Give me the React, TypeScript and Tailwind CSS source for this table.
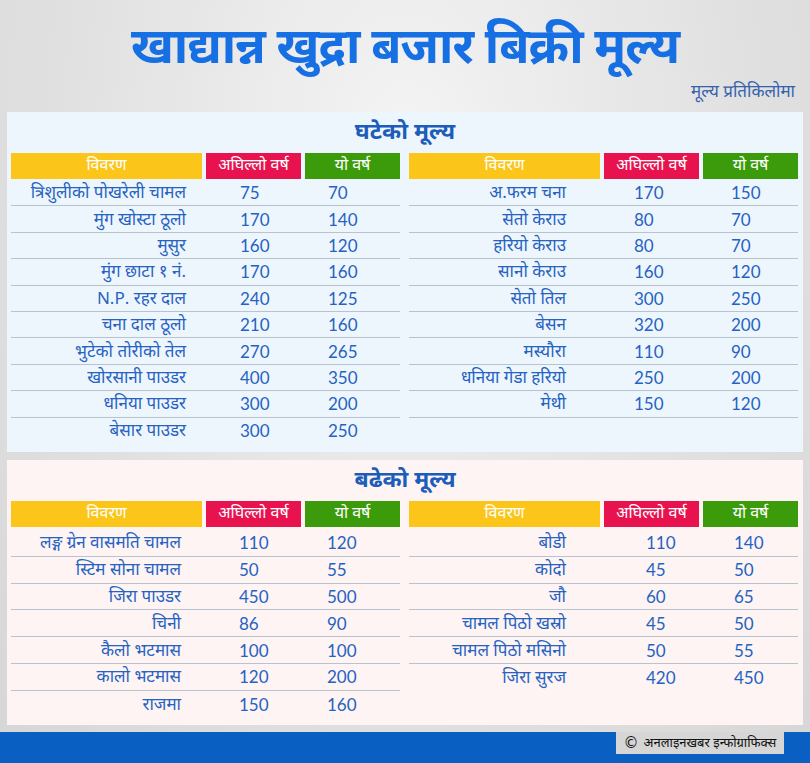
type Row = [string, string, string];

const FONT = "font-['Noto_Sans_Devanagari','Noto_Sans','Lohit_Devanagari',sans-serif]";

const dropLeft: Row[] = [
  ["त्रिशुलीको पोखरेली चामल", "75", "70"],
  ["मुंग खोस्टा ठूलो", "170", "140"],
  ["मुसुर", "160", "120"],
  ["मुंग छाटा १ नं.", "170", "160"],
  ["N.P. रहर दाल", "240", "125"],
  ["चना दाल ठूलो", "210", "160"],
  ["भुटेको तोरीको तेल", "270", "265"],
  ["खोरसानी पाउडर", "400", "350"],
  ["धनिया पाउडर", "300", "200"],
  ["बेसार पाउडर", "300", "250"],
];

const dropRight: Row[] = [
  ["अ.फरम चना", "170", "150"],
  ["सेतो केराउ", "80", "70"],
  ["हरियो केराउ", "80", "70"],
  ["सानो केराउ", "160", "120"],
  ["सेतो तिल", "300", "250"],
  ["बेसन", "320", "200"],
  ["मस्यौरा", "110", "90"],
  ["धनिया गेडा हरियो", "250", "200"],
  ["मेथी", "150", "120"],
];

const riseLeft: Row[] = [
  ["लङ्ग ग्रेन वासमति चामल", "110", "120"],
  ["स्टिम सोना चामल", "50", "55"],
  ["जिरा पाउडर", "450", "500"],
  ["चिनी", "86", "90"],
  ["कैलो भटमास", "100", "100"],
  ["कालो भटमास", "120", "200"],
  ["राजमा", "150", "160"],
];

const riseRight: Row[] = [
  ["बोडी", "110", "140"],
  ["कोदो", "45", "50"],
  ["जौ", "60", "65"],
  ["चामल पिठो खस्रो", "45", "50"],
  ["चामल पिठो मसिनो", "50", "55"],
  ["जिरा सुरज", "420", "450"],
];

interface PriceTableProps {
  rows: Row[];
  namePad: string;
  prevPad: string;
  currPad: string;
  rowHeight: string;
  bodyTop: string;
  lastLine?: boolean;
}

function PriceTable({ rows, namePad, prevPad, currPad, rowHeight, bodyTop, lastLine }: PriceTableProps) {
  return (
    <div className="w-[389px]">
      {/* शीर्षक पट्टी */}
      <div className="grid h-[26px] grid-cols-[191px_95px_95px] gap-x-[4px] text-[16px] leading-none text-white">
        <div className="flex items-center justify-center bg-[#fbc619] pt-[1px]">विवरण</div>
        <div className="flex items-center justify-center bg-[#e8124f] pt-[1px]">अघिल्लो वर्ष</div>
        <div className="flex items-center justify-center bg-[#3c9b0a] pt-[1px]">यो वर्ष</div>
      </div>
      <div className={bodyTop}>
        {rows.map(([name, prev, curr], i) => (
          <div
            key={name}
            className={`grid grid-cols-[191px_95px_95px] gap-x-[4px] items-center leading-none text-[#2562c2] ${rowHeight} ${
              i < rows.length - 1 || lastLine ? "border-b border-[#b9c3cd]" : ""
            }`}
          >
            <div className={`translate-y-[2px] text-right text-[17px] ${namePad}`}>{name}</div>
            <div className={`font-['Lato',sans-serif] text-[17px] ${prevPad}`}>{prev}</div>
            <div className={`font-['Lato',sans-serif] text-[17px] ${currPad}`}>{curr}</div>
          </div>
        ))}
      </div>
    </div>
  );
}

export default function App() {
  return (
    <div className={`flex h-[763px] w-[810px] flex-col overflow-hidden bg-[radial-gradient(ellipse_at_50%_20%,#f4f4f4_0%,#e2e2e2_55%,#d6d6d6_100%)] ${FONT}`}>
      {/* शीर्ष भाग */}
      <header className="flex h-[112px] shrink-0 flex-col">
        <h1 className="mt-[22px] text-center text-[49px] font-bold leading-[58px] tracking-[-1px] text-[#1670e4]">
          खाद्यान्न खुद्रा बजार बिक्री मूल्य
        </h1>
        <p className="mt-[2px] pr-[15px] text-right text-[17px] leading-[22px] text-[#3562ac]">मूल्य प्रतिकिलोमा</p>
      </header>

      {/* घटेको मूल्य */}
      <section className="mx-[7px] h-[340px] shrink-0 bg-[#eef6fd] px-[4px]">
        <h2 className="flex h-[41px] items-center justify-center pt-[2px] text-[23px] font-bold text-[#1c5cba]">घटेको मूल्य</h2>
        <div className="flex items-start justify-between pr-[1px]">
          <PriceTable rows={dropLeft} namePad="pr-[16px]" prevPad="pl-[34px]" currPad="pl-[23px]" rowHeight="h-[26.4px]" bodyTop="mt-[1px]" />
          <PriceTable rows={dropRight} namePad="pr-[34px]" prevPad="pl-[30px]" currPad="pl-[28px]" rowHeight="h-[26.4px]" bodyTop="mt-[1px]" lastLine />
        </div>
      </section>

      {/* बढेको मूल्य */}
      <section className="mx-[7px] mt-[8px] h-[265px] shrink-0 bg-[#fdf4f3] px-[4px]">
        <h2 className="flex h-[41px] items-center justify-center pt-[2px] text-[23px] font-bold text-[#1c5cba]">बढेको मूल्य</h2>
        <div className="flex items-start justify-between pr-[1px]">
          <PriceTable rows={riseLeft} namePad="pr-[21px]" prevPad="pl-[33px]" currPad="pl-[22px]" rowHeight="h-[26.8px]" bodyTop="mt-[3px]" />
          <PriceTable rows={riseRight} namePad="pr-[34px]" prevPad="pl-[42px]" currPad="pl-[31px]" rowHeight="h-[26.8px]" bodyTop="mt-[3px]" />
        </div>
      </section>

      {/* तलको पट्टी */}
      <footer className="mt-[7px] flex h-[31px] shrink-0 items-start justify-end bg-[#0960c2] pr-[26px]">
        <div className="flex h-[22px] w-[168px] items-center justify-center gap-[5px] bg-[#d6d6d6] text-[13px] leading-none text-[#111]">
          <span className="font-['DejaVu_Sans',sans-serif] text-[15px]">©</span>
          <span>अनलाइनखबर इन्फोग्राफिक्स</span>
        </div>
      </footer>
    </div>
  );
}
